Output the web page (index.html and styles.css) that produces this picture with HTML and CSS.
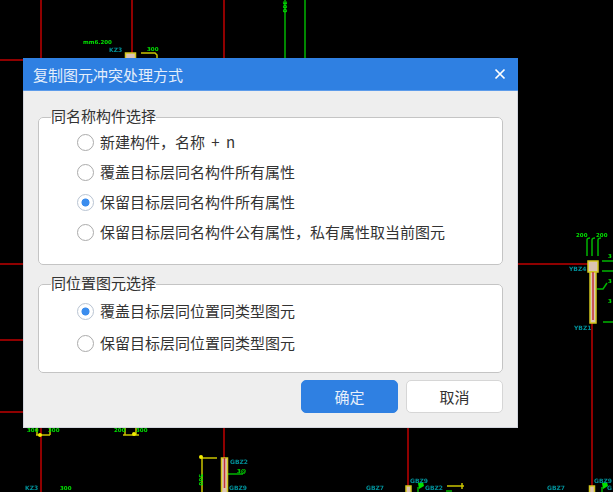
FILE: index.html
```html
<!DOCTYPE html>
<html lang="zh-CN">
<head>
<meta charset="utf-8">
<title>复制图元冲突处理方式</title>
<link rel="stylesheet" href="styles.css">
</head>
<body>
<svg class="cad" width="613" height="492" viewBox="0 0 613 492" aria-hidden="true">
  <g class="red">
    <path d="M41 0V60M132 0V58M224 0V58M0 60H23"/>
    <path d="M0 264H23M0 340H23M0 412H23M518 264H590"/>
    <path d="M41 428V492M224 428V492M408 428V486M592 272V486"/>
  </g>
  <g class="green">
    <path d="M285 0V58M305 0V58"/>
    <path d="M587 256V240Q587 238 590 238M592 256V240Q592 238 595 238M598 256V240Q598 238 601 238"/>
    <path d="M602 261H613M602 271H613M597 289H603L607 283M603 322H613"/>
    <path d="M228 474H243M418 492V487M602 492V487"/>
    <path d="M446 491H452"/>
  </g>
  <g class="yellow">
    <path d="M141 53H155L157 55V58"/>
    <path d="M36 435H50M37 428V435M50 428V435"/>
    <path d="M123 435H139M125 428V435M136 428V435"/>
    <path d="M217 458H202V492"/>
    <path d="M447 486H464M462 483V489"/>
    <circle cx="40" cy="435" r="2"/><circle cx="134" cy="434" r="2"/><circle cx="201" cy="457" r="2"/>
  </g>
  <g class="column">
    <rect x="125.500" y="53" width="10" height="8"/>
    <rect x="221.500" y="458" width="6" height="36"/>
    <rect x="406" y="486" width="5" height="9"/>
    <rect x="589.500" y="486" width="5" height="9"/>
    <rect x="588" y="261" width="10" height="11"/>
    <rect x="590" y="272" width="6" height="51"/>
  </g>
  <path class="red-thin" d="M593 272V320M224.500 458V488"/>
  <g class="marks">
    <path d="M418 483L423 482L424 486L419 489Z"/>
    <path d="M602 483L607 482L608 486L603 489Z"/>
  </g>
  <g class="label-green">
    <text x="83" y="44">mm6.200</text>
    <text x="147" y="51">300</text>
    <text x="27" y="432">300</text>
    <text x="48" y="432">300</text>
    <text x="114" y="432">200</text>
    <text x="136" y="432">300</text>
    <text x="576" y="237">200</text>
    <text x="596" y="237">200</text>
    <text x="237" y="473">3@</text>
    <text x="60" y="490">300</text>
    <text x="608" y="258">3</text>
    <text x="608" y="283">3</text>
    <text x="608" y="303">3</text>
    <text transform="rotate(90 283 1)" x="283" y="1">300</text>
    <text transform="rotate(90 199 474)" x="199" y="474">500</text>
  </g>
  <g class="label-teal">
    <text x="109" y="52">KZ3</text>
    <text x="569" y="271">YBZ4</text>
    <text x="574" y="330">YBZ1</text>
    <text x="230" y="464">GBZ2</text>
    <text x="229" y="490">GBZ9</text>
    <text x="25" y="490">KZ3</text>
    <text x="410" y="483">GBZ9</text>
    <text x="594" y="483">GBZ9</text>
    <text x="366" y="490">GBZ7</text>
    <text x="425" y="490">GBZ2</text>
    <text x="547" y="490">GBZ7</text>
    <text x="607" y="490">G</text>
  </g>
</svg>

<section class="dialog">
  <header class="titlebar">
    <h1 class="title">复制图元冲突处理方式</h1>
    <button class="close" type="button" aria-label="关闭">
      <svg width="12" height="12" viewBox="0 0 12 12"><path d="M1.500 1.500L10.500 10.500M10.500 1.500L1.500 10.500"/></svg>
    </button>
  </header>
  <form class="body">
    <fieldset class="group group-name">
      <legend>同名称构件选择</legend>
      <label class="row"><input type="radio" name="name"><span class="spaced">新建构件，名称 + n</span></label>
      <label class="row"><input type="radio" name="name"><span>覆盖目标层同名构件所有属性</span></label>
      <label class="row"><input type="radio" name="name" checked><span>保留目标层同名构件所有属性</span></label>
      <label class="row"><input type="radio" name="name"><span>保留目标层同名构件公有属性，私有属性取当前图元</span></label>
    </fieldset>
    <fieldset class="group group-place">
      <legend>同位置图元选择</legend>
      <label class="row"><input type="radio" name="place" checked><span>覆盖目标层同位置同类型图元</span></label>
      <label class="row"><input type="radio" name="place"><span>保留目标层同位置同类型图元</span></label>
    </fieldset>
    <div class="actions">
      <button class="btn btn-primary" type="button">确定</button>
      <button class="btn btn-default" type="button">取消</button>
    </div>
  </form>
</section>
</body>
</html>
```

FILE: styles.css
```css
* { box-sizing: border-box; }

html, body {
  margin: 0;
  width: 613px;
  height: 492px;
  overflow: hidden;
  background: #000;
}

body {
  position: relative;
  font-family: "Noto Sans CJK SC", "Noto Sans", sans-serif;
  font-size: 15px;
  color: #333;
}

/* CAD drawing behind the dialog */
.cad {
  position: absolute;
  left: 0;
  top: 0;
  filter: blur(0.5px);
}
.cad path { fill: none; }
.red path { stroke: #8f0000; stroke-width: 2; }
.red-thin { stroke: #c2303a; stroke-width: 1.500; }
.green path { stroke: #00b400; stroke-width: 1.500; }
.yellow path { stroke: #c9c400; stroke-width: 1.500; }
.yellow circle { fill: #f2ee00; }
.column rect { fill: #dcc4b4; stroke: #d2c81e; stroke-width: 1.500; }
.cad .marks path { fill: #00e000; }
.cad text {
  font-family: "DejaVu Sans", sans-serif;
  font-weight: 700;
}
.label-green text { fill: #00e000; font-size: 5.500px; }
.label-teal text { fill: #008f98; font-size: 6px; }

/* Dialog */
.dialog {
  position: absolute;
  left: 23px;
  top: 58px;
  width: 495px;
  height: 370px;
  display: flex;
  flex-direction: column;
  background: #eeeeee;
}

.titlebar {
  flex: none;
  height: 33px;
  display: flex;
  align-items: center;
  justify-content: space-between;
  padding: 0 12px 0 10px;
  background: #2f80e2;
  border-bottom: 1px solid #5c9bea;
}

.title {
  margin: 0;
  font-size: 15px;
  font-weight: 400;
  color: #e4eefb;
}

.close {
  display: flex;
  padding: 0;
  border: 0;
  background: none;
}
.close path {
  fill: none;
  stroke: #fff;
  stroke-width: 1.700;
}

.body {
  flex: 1;
  display: flex;
  flex-direction: column;
  padding: 16px 14px 14px;
  border: 1px solid #d3d6de;
  border-top: 0;
}

.group {
  margin: 0;
  padding: 0;
  min-width: 0;
  background: #fff;
  border: 1px solid #c4c4c4;
  border-radius: 5px;
}
.group legend {
  margin-left: 12px;
  padding: 0 0 2px;
  height: 20px;
  line-height: 18px;
  color: #333;
}

.group-name { padding-bottom: 17px; }
.group-name .row { height: 30px; }

.group-place { margin-top: 9px; padding: 1px 0 12px; }
.group-place .row { height: 32.500px; }

.row {
  display: flex;
  align-items: center;
  gap: 6px;
  padding-left: 38px;
}
.row span { margin-bottom: 2px; }
.spaced { word-spacing: 3px; }

.row input {
  appearance: none;
  flex: none;
  width: 17px;
  height: 17px;
  margin: 0;
  border: 1.500px solid #ababab;
  border-radius: 50%;
  background: #fff;
}
.row input:checked {
  border-color: #b9c4d2;
  background: radial-gradient(circle, #3b8dee 0, #3b8dee 3.600px, #fff 4.400px);
}

.actions {
  display: flex;
  justify-content: flex-end;
  gap: 8px;
  margin-top: 7px;
}

.btn {
  width: 97px;
  height: 33px;
  padding: 0;
  font: inherit;
  border-radius: 5px;
}
.btn-primary {
  color: #e6effb;
  background: #2f80e2;
  border: 1px solid #2f80e2;
}
.btn-default {
  color: #333;
  background: #fff;
  border: 1.500px solid #d6d6d6;
}
```
